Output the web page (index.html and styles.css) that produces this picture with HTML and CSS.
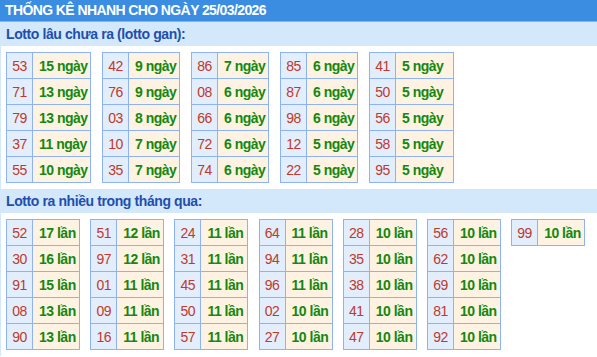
FILE: index.html
```html
<!DOCTYPE html>
<html lang="vi">
<head>
<meta charset="utf-8">
<title>Thống kê nhanh</title>
<link rel="stylesheet" href="styles.css">
</head>
<body>
<div class="wrap">
  <div class="title">THỐNG KÊ NHANH CHO NGÀY 25/03/2026</div>
  <div class="sec">Lotto lâu chưa ra (lotto gan):</div>
  <div class="tables">
    <table class="t wide"><tr><td class="n">53</td><td class="d">15 ngày</td></tr><tr><td class="n">71</td><td class="d">13 ngày</td></tr><tr><td class="n">79</td><td class="d">13 ngày</td></tr><tr><td class="n">37</td><td class="d">11 ngày</td></tr><tr><td class="n">55</td><td class="d">10 ngày</td></tr></table>
    <table class="t"><tr><td class="n">42</td><td class="d">9 ngày</td></tr><tr><td class="n">76</td><td class="d">9 ngày</td></tr><tr><td class="n">03</td><td class="d">8 ngày</td></tr><tr><td class="n">10</td><td class="d">7 ngày</td></tr><tr><td class="n">35</td><td class="d">7 ngày</td></tr></table>
    <table class="t"><tr><td class="n">86</td><td class="d">7 ngày</td></tr><tr><td class="n">08</td><td class="d">6 ngày</td></tr><tr><td class="n">66</td><td class="d">6 ngày</td></tr><tr><td class="n">72</td><td class="d">6 ngày</td></tr><tr><td class="n">74</td><td class="d">6 ngày</td></tr></table>
    <table class="t"><tr><td class="n">85</td><td class="d">6 ngày</td></tr><tr><td class="n">87</td><td class="d">6 ngày</td></tr><tr><td class="n">98</td><td class="d">6 ngày</td></tr><tr><td class="n">12</td><td class="d">5 ngày</td></tr><tr><td class="n">22</td><td class="d">5 ngày</td></tr></table>
    <table class="t wide"><tr><td class="n">41</td><td class="d">5 ngày</td></tr><tr><td class="n">50</td><td class="d">5 ngày</td></tr><tr><td class="n">56</td><td class="d">5 ngày</td></tr><tr><td class="n">58</td><td class="d">5 ngày</td></tr><tr><td class="n">95</td><td class="d">5 ngày</td></tr></table>
  </div>
  <div class="sec">Lotto ra nhiều trong tháng qua:</div>
  <div class="tables two">
    <table class="t lan"><tr><td class="n">52</td><td class="d">17 lần</td></tr><tr><td class="n">30</td><td class="d">16 lần</td></tr><tr><td class="n">91</td><td class="d">15 lần</td></tr><tr><td class="n">08</td><td class="d">13 lần</td></tr><tr><td class="n">90</td><td class="d">13 lần</td></tr></table>
    <table class="t lan"><tr><td class="n">51</td><td class="d">12 lần</td></tr><tr><td class="n">97</td><td class="d">12 lần</td></tr><tr><td class="n">01</td><td class="d">11 lần</td></tr><tr><td class="n">09</td><td class="d">11 lần</td></tr><tr><td class="n">16</td><td class="d">11 lần</td></tr></table>
    <table class="t lan"><tr><td class="n">24</td><td class="d">11 lần</td></tr><tr><td class="n">31</td><td class="d">11 lần</td></tr><tr><td class="n">45</td><td class="d">11 lần</td></tr><tr><td class="n">50</td><td class="d">11 lần</td></tr><tr><td class="n">57</td><td class="d">11 lần</td></tr></table>
    <table class="t lan"><tr><td class="n">64</td><td class="d">11 lần</td></tr><tr><td class="n">94</td><td class="d">11 lần</td></tr><tr><td class="n">96</td><td class="d">11 lần</td></tr><tr><td class="n">02</td><td class="d">10 lần</td></tr><tr><td class="n">27</td><td class="d">10 lần</td></tr></table>
    <table class="t lan"><tr><td class="n">28</td><td class="d">10 lần</td></tr><tr><td class="n">35</td><td class="d">10 lần</td></tr><tr><td class="n">38</td><td class="d">10 lần</td></tr><tr><td class="n">41</td><td class="d">10 lần</td></tr><tr><td class="n">47</td><td class="d">10 lần</td></tr></table>
    <table class="t lan"><tr><td class="n">56</td><td class="d">10 lần</td></tr><tr><td class="n">62</td><td class="d">10 lần</td></tr><tr><td class="n">69</td><td class="d">10 lần</td></tr><tr><td class="n">81</td><td class="d">10 lần</td></tr><tr><td class="n">92</td><td class="d">10 lần</td></tr></table>
    <table class="t lan"><tr><td class="n">99</td><td class="d">10 lần</td></tr></table>
  </div>
</div>
</body>
</html>
```
FILE: styles.css
```css
html, body {
  margin: 0;
  padding: 0;
  background: #ffffff;
}
body {
  font-family: "Liberation Sans", Arial, sans-serif;
  font-size: 14px;
}
.wrap {
  border-left: 1px solid #d4e8fb;
}
.title {
  background: #3a8de0;
  color: #ffffff;
  font-weight: bold;
  height: 21px;
  line-height: 21px;
  padding-left: 5px;
  border-bottom: 1px solid #7fb5ec;
  margin-left: -1px;
  letter-spacing: -0.6px;
}
.sec {
  background: #d4e8fb;
  color: #1e4fae;
  font-weight: bold;
  height: 24px;
  line-height: 25px;
  padding-left: 5px;
  letter-spacing: -0.4px;
}
.tables {
  display: flex;
  align-items: flex-start;
  gap: 11px;
  padding: 6px 5px;
}
.tables.two {
  gap: 10.2px;
}
.t {
  border-collapse: collapse;
}
.t td {
  border: 1px solid #8db3f2;
  height: 26px;
  padding: 0;
  box-sizing: border-box;
  white-space: nowrap;
  letter-spacing: -0.5px;
}
.t .n {
  width: 26px;
  background: #e2eefc;
  color: #c0392b;
  text-align: center;
}
.t .d {
  width: 51px;
  background: #fef3e2;
  color: #14880f;
  font-weight: bold;
  padding-left: 6px;
}
.t.wide .d {
  width: 58px;
}
.t.lan .d {
  width: 47px;
}
```
